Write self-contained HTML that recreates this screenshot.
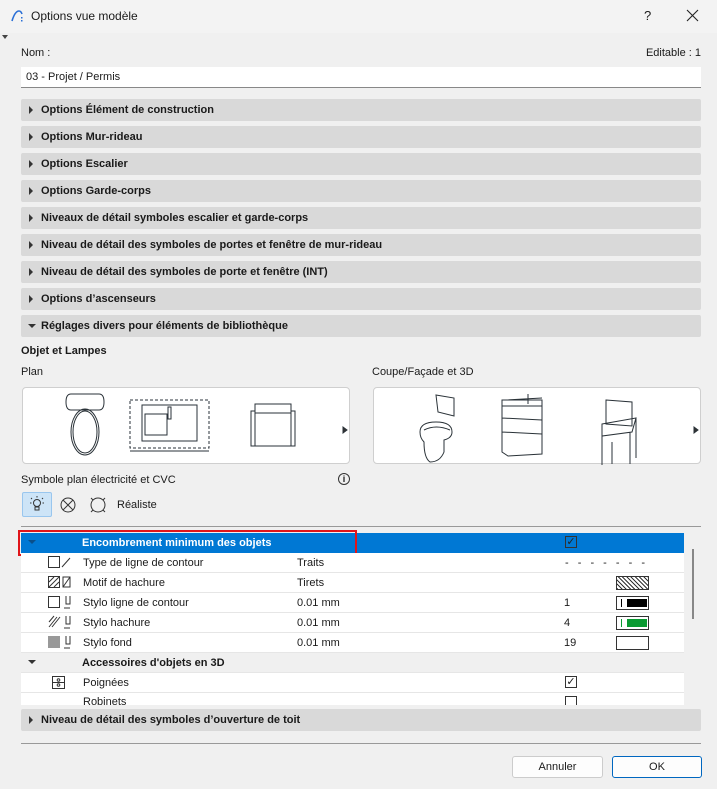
<!DOCTYPE html>
<html><head><meta charset="utf-8"><style>
*{margin:0;padding:0;box-sizing:border-box}
body{width:717px;height:789px;background:#f0f0f0;font-family:"Liberation Sans",sans-serif;font-size:11px;color:#1a1a1a;position:relative;overflow:hidden}
.a{position:absolute}
.bar{position:absolute;left:21px;width:680px;height:22px;background:#d9d9d9;border-radius:2px;font-weight:bold;line-height:23px;padding-left:20px}
.bar:before{content:"";position:absolute;left:8px;top:7px;border-left:4px solid #333;border-top:4px solid transparent;border-bottom:4px solid transparent}
.bar.open:before{display:none}
.row{position:absolute;left:21px;width:663px;height:20px;background:#fff;border-bottom:1px solid #e6e6e6;line-height:21px}
.box{position:absolute;background:#fff;border:1px solid #cfcfcf;border-radius:4px}
.cb{position:absolute;width:12px;height:12px;border:1px solid #333;font-size:11px;line-height:10px;text-align:center}
</style></head><body>
<div class="a" style="left:0;top:0;width:717px;height:33px;background:#f3f3f3"></div>
<svg class="a" style="left:10px;top:9px" width="14" height="14"><path d="M2 12 Q5 2 9 2 Q11 2 12 5" stroke="#2a6fd6" stroke-width="1.6" fill="none"/><rect x="11" y="8" width="1.5" height="1.5" fill="#2a6fd6"/><rect x="11" y="11" width="1.5" height="1.5" fill="#2a6fd6"/></svg>
<div class="a" style="left:31px;top:9px;font-size:12px">Options vue modèle</div>
<div class="a" style="left:644px;top:8px;font-size:13px">?</div>
<svg class="a" style="left:686px;top:9px" width="13" height="13" stroke="#222" stroke-width="1.1"><path d="M1 1 L12 12 M12 1 L1 12"/></svg>
<div class="a" style="left:2px;top:35px;border-top:4px solid #444;border-left:3px solid transparent;border-right:3px solid transparent"></div>
<div class="a" style="left:21px;top:47px">Nom :</div>
<div class="a" style="right:16px;top:47px">Editable : 1</div>
<div class="a" style="left:21px;top:67px;width:680px;height:21px;background:#fff;border-bottom:1px solid #888;padding-left:5px;line-height:20px">03 - Projet / Permis</div>
<div class="bar" style="top:99px">Options Élément de construction</div>
<div class="bar" style="top:126px">Options Mur-rideau</div>
<div class="bar" style="top:153px">Options Escalier</div>
<div class="bar" style="top:180px">Options Garde-corps</div>
<div class="bar" style="top:207px">Niveaux de détail symboles escalier et garde-corps</div>
<div class="bar" style="top:234px">Niveau de détail des symboles de portes et fenêtre de mur-rideau</div>
<div class="bar" style="top:261px">Niveau de détail des symboles de porte et fenêtre (INT)</div>
<div class="bar" style="top:288px">Options d’ascenseurs</div>
<div class="bar open" style="top:315px">Réglages divers pour éléments de bibliothèque</div>
<div class="a" style="left:28px;top:324px;border-top:4px solid #333;border-left:4px solid transparent;border-right:4px solid transparent;width:0"></div>
<div class="a" style="left:21px;top:345px;font-weight:bold">Objet et Lampes</div>
<div class="a" style="left:21px;top:366px">Plan</div>
<div class="a" style="left:372px;top:366px">Coupe/Façade et 3D</div>
<div class="box" style="left:22px;top:387px;width:328px;height:77px">
<svg width="328" height="77" fill="none" stroke="#2a3238" stroke-width="1"><path d="M48 6 h28 q5 0 5 8 q0 8-5 8 h-28 q-5 0-5-8 q0-8 5-8z"/><ellipse cx="62" cy="44" rx="14" ry="23"/><ellipse cx="62" cy="44" rx="12" ry="21"/>
<rect x="107" y="12" width="79" height="48" stroke-dasharray="3 2"/><line x1="107" y1="63" x2="186" y2="63"/><rect x="119" y="17" width="55" height="36"/><rect x="122" y="26" width="22" height="21"/><rect x="145" y="19" width="3" height="12"/>
<rect x="232" y="16" width="36" height="42"/><line x1="232" y1="25" x2="268" y2="25"/><path d="M232 23 h-4 v35 h4 M268 23 h4 v35 h-4"/><path d="M320 39 l4 3 l-4 3z" fill="#333"/></svg></div>
<div class="box" style="left:373px;top:387px;width:328px;height:77px">
<svg width="328" height="77" fill="none" stroke="#2a3238" stroke-width="1"><path d="M62 7 l18 3 v18 l-16-4z M46 44 q0-10 16-10 q16 0 16 10 q0 6-8 8 v12 q-4 10-14 10 q-6-4-6-20 q-4-4-4-10z M50 42 q12-6 26 0"/>
<path d="M128 12 l40 0 l0 6 l-40 0z M128 18 v46 l6 4 l34-2 v-48 M128 30 l40 2 M128 44 l40 2 M154 6 v10 M132 12 l36 -2"/>
<path d="M232 12 l26 2 v24 l-26 -2z M228 36 l34 -6 l-4 14 l-30 4z M228 48 v30 M256 44 v32 M238 54 v22 M262 30 v40"/><path d="M320 39 l4 3 l-4 3z" fill="#333"/></svg></div>
<div class="a" style="left:21px;top:474px">Symbole plan électricité et CVC</div>
<div class="a" style="left:338px;top:473px;width:12px;height:12px;border:1px solid #333;border-radius:50%;font-size:9px;text-align:center;line-height:10px;font-weight:bold">i</div>
<div class="a" style="left:22px;top:492px;width:30px;height:25px;background:#cde4f7;border:1px solid #99c6ee;border-radius:2px"></div>
<svg class="a" style="left:28px;top:495px" width="120" height="20" fill="none" stroke="#333"><circle cx="9" cy="8" r="3.5"/><path d="M7 12 h4 v3 h-4z M9 1 v1.5 M3 3 l1 1 M15 3 l-1 1 M2 8 h1.5 M16 8 h-1.5"/><circle cx="40" cy="10" r="7"/><path d="M35 5 l10 10 M45 5 l-10 10"/><circle cx="70" cy="10" r="7"/><path d="M63 3 l2 2 M77 3 l-2 2 M63 17 l2 -2 M77 17 l-2 -2"/></svg>
<div class="a" style="left:117px;top:499px">Réaliste</div>
<div class="a" style="left:21px;top:526px;width:680px;height:1px;background:#999"></div>
<div class="a" style="left:21px;top:533px;width:663px;height:20px;background:#0078d4;color:#fff;font-weight:bold;line-height:21px;padding-left:61px">Encombrement minimum des objets</div>
<div class="a" style="left:28px;top:540px;border-top:4px solid #0a4f8a;border-left:4px solid transparent;border-right:4px solid transparent"></div>
<div class="cb" style="left:565px;top:536px;border-color:#333;color:#222">✓</div>
<div class="a" style="left:18px;top:530px;width:339px;height:26px;border:2px solid #e0151a"></div>
<div class="row" style="top:553px;padding-left:62px">Type de ligne de contour<span class="a" style="left:276px">Traits</span><span class="a" style="left:544px;letter-spacing:3px">- - - - - - -</span></div>
<div class="row" style="top:573px;padding-left:62px">Motif de hachure<span class="a" style="left:276px">Tirets</span><span class="a" style="left:595px;top:3px;width:33px;height:14px;border:1px solid #333;background:repeating-linear-gradient(45deg,#333 0 1px,#fff 1px 3px)"></span></div>
<div class="row" style="top:593px;padding-left:62px">Stylo ligne de contour<span class="a" style="left:276px">0.01 mm</span><span class="a" style="left:543px">1</span><span class="a" style="left:595px;top:3px;width:33px;height:14px;border:1px solid #333;background:#fff"><span class="a" style="left:10px;top:2px;width:20px;height:8px;background:#000"></span><span class="a" style="left:4px;top:2px;width:1px;height:8px;background:#000"></span></span></div>
<div class="row" style="top:613px;padding-left:62px">Stylo hachure<span class="a" style="left:276px">0.01 mm</span><span class="a" style="left:543px">4</span><span class="a" style="left:595px;top:3px;width:33px;height:14px;border:1px solid #333;background:#fff"><span class="a" style="left:10px;top:2px;width:20px;height:8px;background:#0a9a32"></span><span class="a" style="left:4px;top:2px;width:1px;height:8px;background:#0a9a32"></span></span></div>
<div class="row" style="top:633px;padding-left:62px">Stylo fond<span class="a" style="left:276px">0.01 mm</span><span class="a" style="left:543px">19</span><span class="a" style="left:595px;top:3px;width:33px;height:14px;border:1px solid #333;background:#fff"></span></div>
<div class="row" style="top:653px;background:#f0f0f0;font-weight:bold;padding-left:61px">Accessoires d'objets en 3D</div>
<div class="a" style="left:28px;top:660px;border-top:4px solid #333;border-left:4px solid transparent;border-right:4px solid transparent"></div>
<div class="row" style="top:673px;padding-left:62px">Poignées</div>
<div class="a" style="left:21px;top:693px;width:663px;height:12px;background:#fff;overflow:hidden;padding-left:62px;line-height:19px">Robinets</div>
<div class="cb" style="left:565px;top:676px">✓</div>
<div class="a" style="left:565px;top:696px;width:12px;height:9px;border:1px solid #333;border-bottom:none"></div>
<svg class="a" style="left:48px;top:556px" width="32" height="100" fill="none" stroke="#333"><rect x="0.5" y="0.5" width="11" height="11"/><path d="M14 11 l8 -9"/><rect x="0.5" y="20.5" width="11" height="11"/><rect x="0.5" y="40.5" width="11" height="11"/><path d="M18 40 v8 h4 v-8 M16 52 h6"/><path d="M18 60 v8 h4 v-8 M16 72 h6"/><rect x="0" y="80" width="12" height="12" fill="#999" stroke="none"/><path d="M18 80 v8 h4 v-8 M16 92 h6"/><path d="M1 71 l8-10 M4 71 l8-10 M1 66 l5-6" /><path d="M15 21 h7 v10 h-7z M15 31 l7-10"/><path d="M1 31 l10-10 M1 26 l5-5 M6 31 l5-5"/></svg>
<svg class="a" style="left:52px;top:676px" width="14" height="14" fill="none" stroke="#333"><rect x="0.5" y="0.5" width="12" height="12"/><circle cx="6.5" cy="4" r="1.3"/><circle cx="6.5" cy="9" r="1.3"/><line x1="0.5" y1="6.5" x2="12.5" y2="6.5"/></svg>
<div class="a" style="left:692px;top:549px;width:2px;height:70px;background:#888"></div>
<div class="bar" style="top:709px">Niveau de détail des symboles d’ouverture de toit</div>
<div class="a" style="left:21px;top:743px;width:680px;height:1px;background:#999"></div>
<div class="a" style="left:512px;top:756px;width:91px;height:22px;background:#fdfdfd;border:1px solid #ccc;border-radius:3px;text-align:center;line-height:20px">Annuler</div>
<div class="a" style="left:612px;top:756px;width:90px;height:22px;background:#fdfdfd;border:1px solid #0067c0;border-radius:3px;text-align:center;line-height:20px">OK</div>
</body></html>
